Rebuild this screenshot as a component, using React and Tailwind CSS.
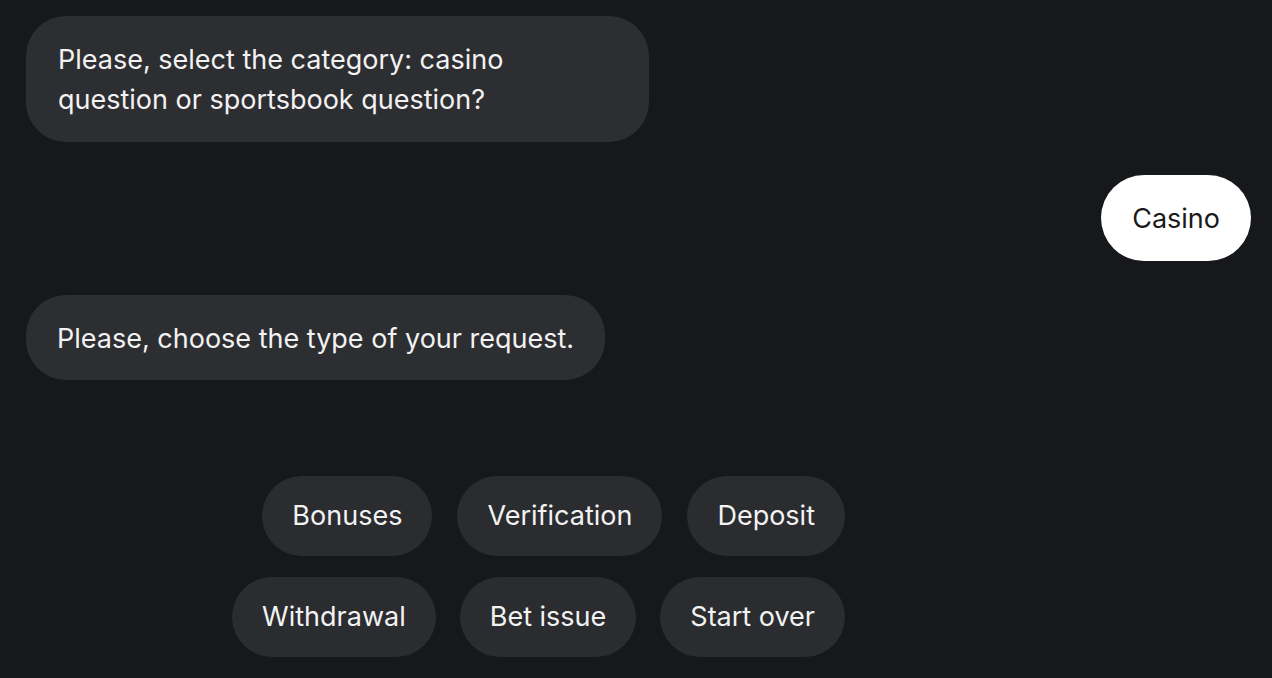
import React from "react";

const row1 = ["Bonuses", "Verification", "Deposit"];
const row2 = ["Withdrawal", "Bet issue", "Start over"];

function Chip({ label }) {
  return (
    <button className="rounded-full bg-[#2b2c30] px-[30px] py-[20px] text-[27px] leading-[40px] text-[#f2f2f2]">
      {label}
    </button>
  );
}

export default function App() {
  return (
    <div
      className="min-h-[678px] w-full overflow-hidden bg-[#17181b] pl-[26px] pr-[21px] pt-[16px]"
      style={{ fontFamily: "Inter, 'Noto Sans', sans-serif" }}
    >
      {/* bot message */}
      <div className="w-[623px] rounded-[40px] bg-[#2d2e31] px-[32px] pb-[22px] pt-[24px] text-[27px] leading-[40px] text-[#f2f2f2]">
        Please, select the category: casino question or sportsbook question?
      </div>

      {/* user reply */}
      <div className="mt-[33px] flex justify-end">
        <div className="rounded-full bg-white px-[31px] pb-[22px] pt-[24px] text-[27px] leading-[40px] text-[#1a1a1a]">
          Casino
        </div>
      </div>

      {/* bot message */}
      <div className="mt-[34px] w-fit rounded-[40px] bg-[#2d2e31] px-[31px] pb-[21px] pt-[24px] text-[27px] leading-[40px] text-[#f2f2f2]">
        Please, choose the type of your request.
      </div>

      {/* quick replies */}
      <div className="mt-[96px] w-[819px]">
        <div className="flex justify-end gap-[25px]">
          {row1.map((l) => (
            <Chip key={l} label={l} />
          ))}
        </div>
        <div className="mt-[21px] flex justify-end gap-[24px]">
          {row2.map((l) => (
            <Chip key={l} label={l} />
          ))}
        </div>
      </div>
    </div>
  );
}
